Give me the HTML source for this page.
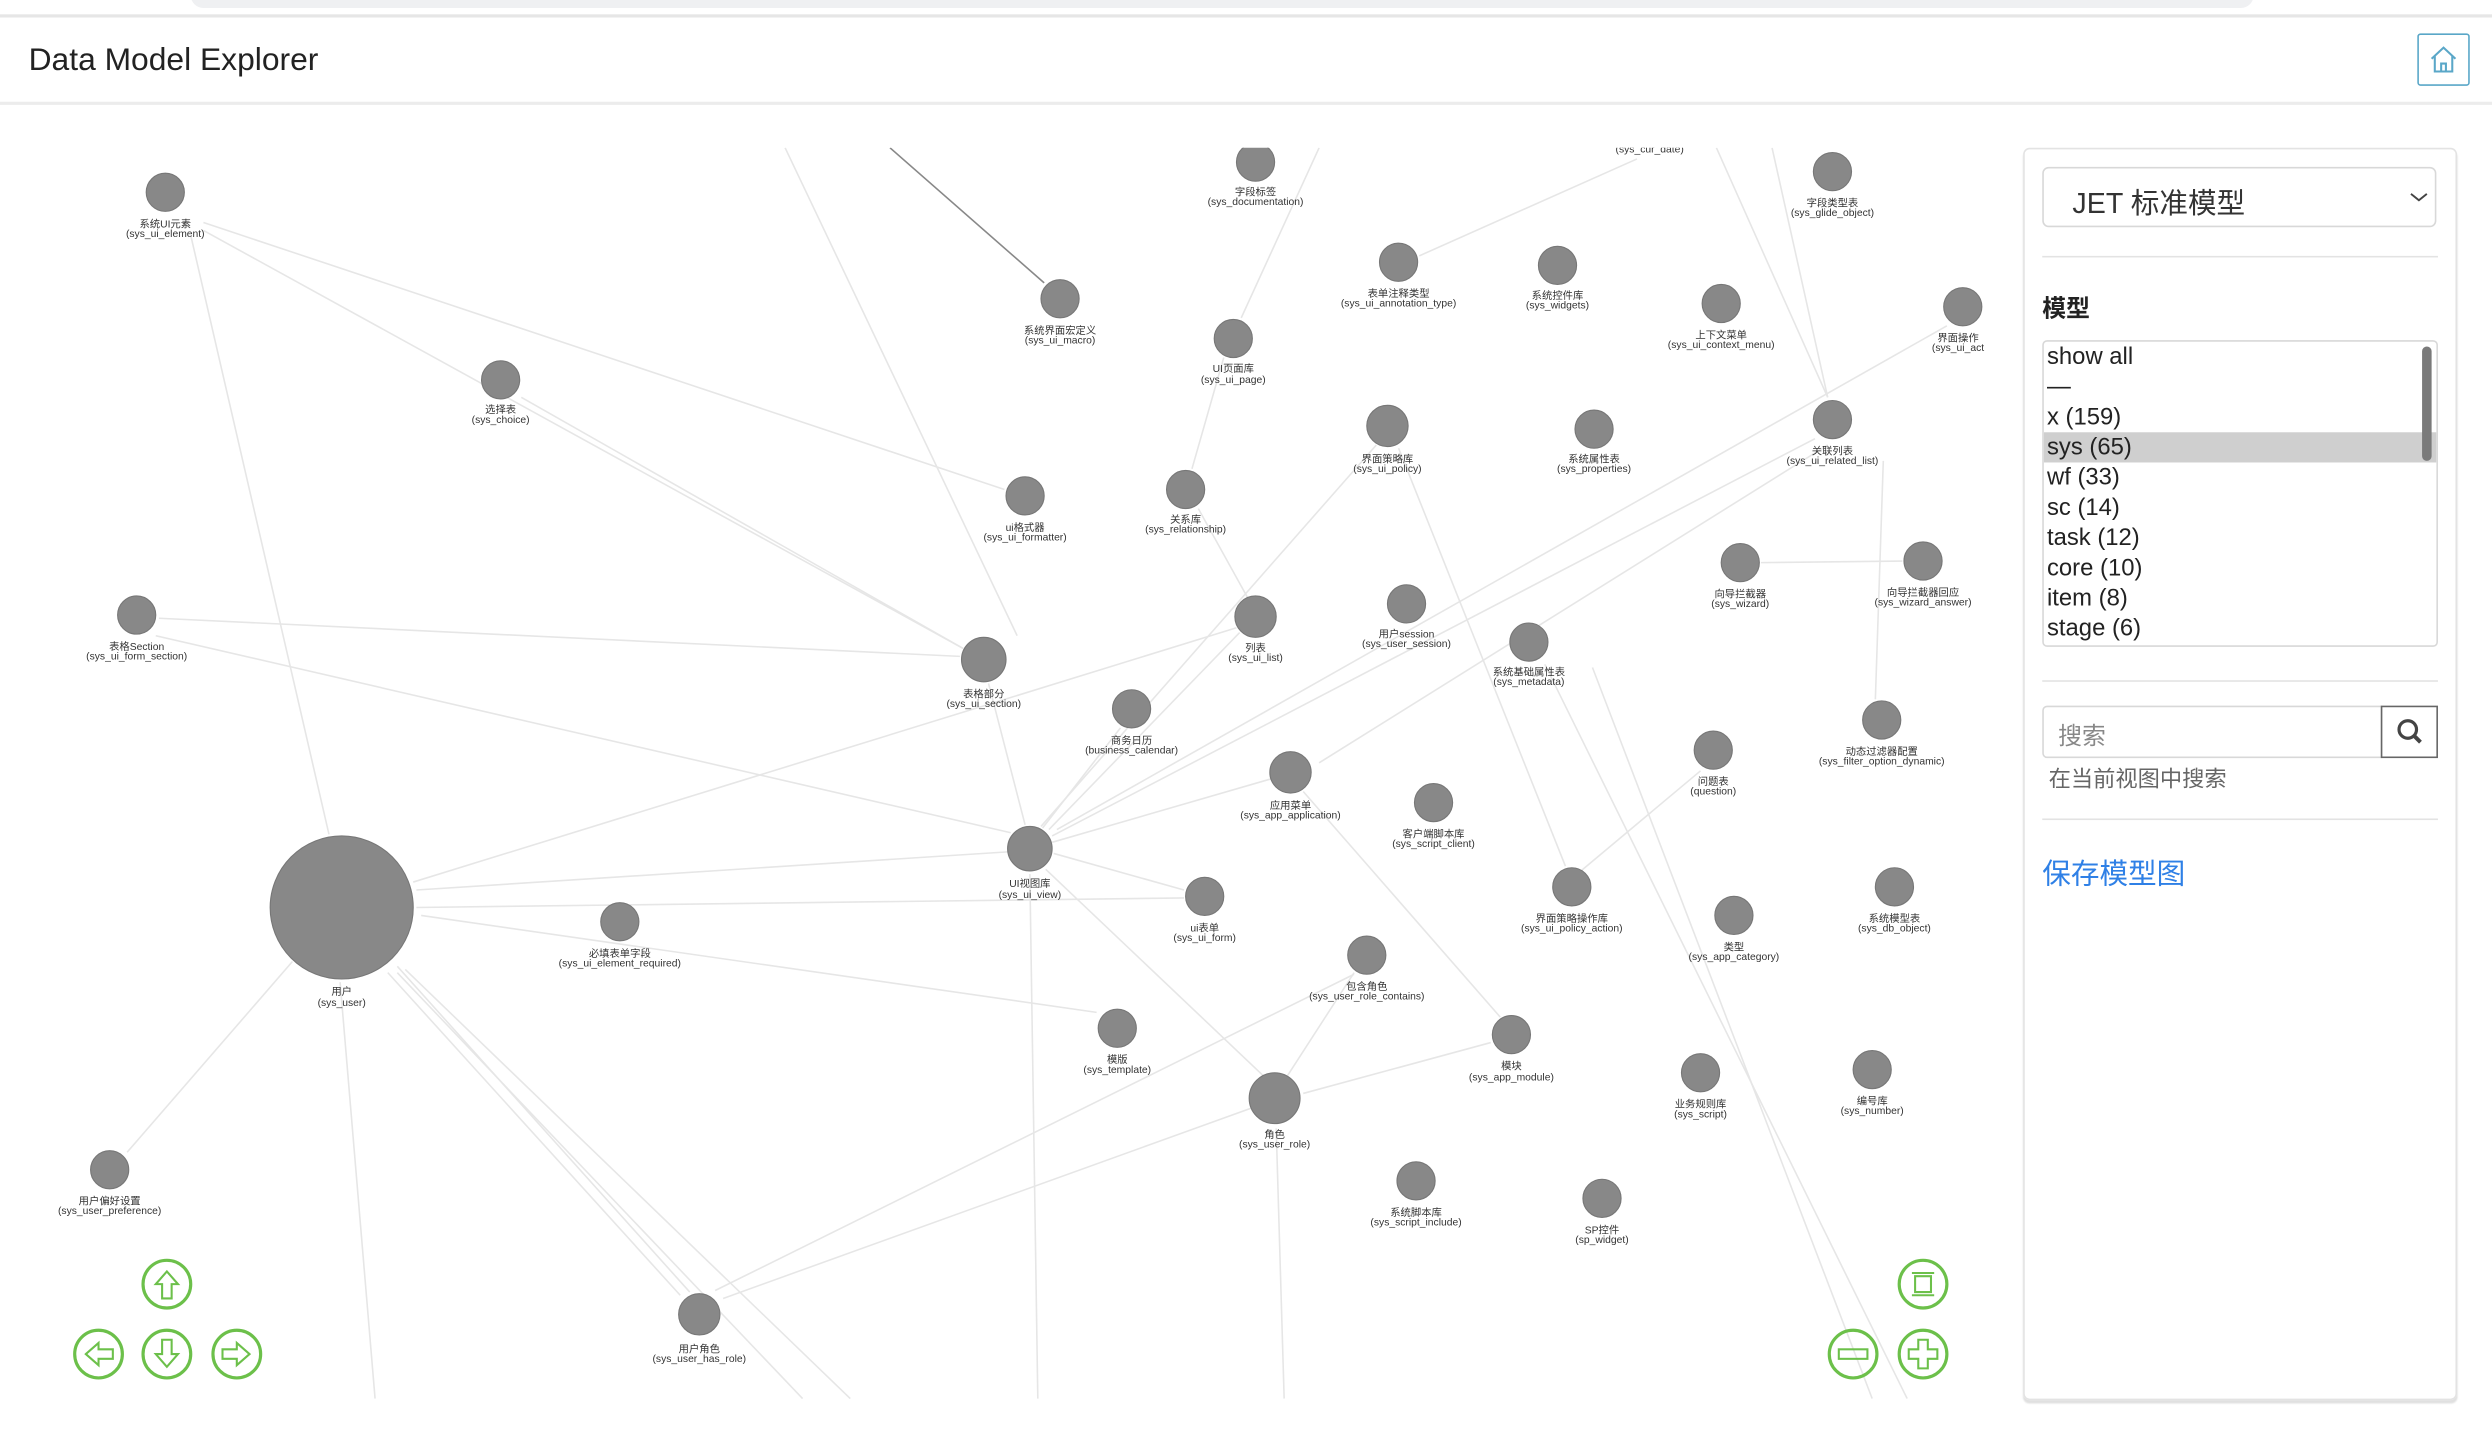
<!DOCTYPE html>
<html><head><meta charset="utf-8">
<style>
html,body{margin:0;padding:0;background:#fff;overflow:hidden;width:2492px;height:1440px}
#w{position:absolute;left:0;top:0;width:1568px;height:906px;transform:scale(1.58929);transform-origin:0 0;font-family:"Liberation Sans","Noto Sans CJK SC",sans-serif;}
.topbar{position:absolute;left:120px;top:-6px;width:1298px;height:11px;background:#eff0f2;border-radius:0 0 8px 8px}
.l1{position:absolute;left:0;top:9px;width:1568px;height:2px;background:#e6e6e6}
.l2{position:absolute;left:0;top:64px;width:1568px;height:2px;background:#ececec}
h1{position:absolute;left:18px;top:27px;margin:0;font-size:20px;font-weight:normal;color:#222;letter-spacing:0}
.home{position:absolute;left:1521px;top:21px;width:33px;height:33px;border:1px solid #5aa7c8;border-radius:2px;box-sizing:border-box}
.panel{position:absolute;left:1273px;top:93px;width:273px;height:788px;border:1px solid #e3e3e3;border-radius:4px;box-sizing:border-box;box-shadow:0 2px 1px #e0e0e0}
.sel{position:absolute;left:1285px;top:105px;width:248px;height:38px;border:1px solid #d8d8d8;border-radius:4px;box-sizing:border-box;font-size:18px;color:#333;padding:8px 0 0 18px}
.hr{position:absolute;left:1285px;width:249px;height:1px;background:#e3e3e3}
.lbl{position:absolute;left:1285px;top:183px;font-size:15px;font-weight:bold;color:#222}
.list{position:absolute;left:1285px;top:214px;width:249px;height:193px;border:1px solid #d8d8d8;border-radius:3px;box-sizing:border-box;overflow:hidden}
.list div{height:19px;line-height:19px;font-size:15px;color:#222;padding-left:2px}
.list .on{background:#cfcfcf}
.sb{position:absolute;left:1524px;top:218px;width:6px;height:72px;background:#7a7a7a;border-radius:3px}
.srch{position:absolute;left:1285px;top:444px;width:214px;height:33px;border:1px solid #d8d8d8;border-radius:3px 0 0 3px;box-sizing:border-box;font-size:15px;color:#888;padding:7px 0 0 9px}
.sbtn{position:absolute;left:1498px;top:444px;width:36px;height:33px;border:1px solid #666;box-sizing:border-box}
.hint{position:absolute;left:1289px;top:480px;font-size:14px;color:#666}
.save{position:absolute;left:1285px;top:536px;font-size:18px;color:#2f80e6}
svg text{font-family:"Liberation Sans","Noto Sans CJK SC",sans-serif}
</style></head><body><div id="w">
<div class="topbar"></div><div class="l1"></div>
<h1>Data Model Explorer</h1>
<div class="home"><svg width="31" height="31" viewBox="0 0 31 31"><path d="M8 15 L15.5 8 L23 15 M10 13.5 V23 H21 V13.5 M14 23 V18 H17 V23" fill="none" stroke="#5aa7c8" stroke-width="1.3"/></svg></div>
<div class="l2"></div>

<svg style="position:absolute;left:0;top:93px" width="1250" height="788" viewBox="0 93 1250 788">
<g stroke="#e6e6e6" stroke-width="1" fill="none">
<line x1="120" y1="148" x2="207" y2="525"/>
<line x1="128" y1="145" x2="606" y2="408"/>
<line x1="128" y1="140" x2="632" y2="308"/>
<line x1="328" y1="250" x2="606" y2="408"/>
<line x1="494" y1="93" x2="640" y2="400"/>
<line x1="830" y1="93" x2="781" y2="200"/>
<line x1="1030" y1="100" x2="893" y2="161"/>
<line x1="1080" y1="93" x2="1150" y2="250"/>
<line x1="1115" y1="93" x2="1150" y2="250"/>
<line x1="1142" y1="276" x2="662" y2="526"/>
<line x1="1225" y1="205" x2="665" y2="522"/>
<line x1="866" y1="280" x2="655" y2="520"/>
<line x1="880" y1="282" x2="985" y2="545"/>
<line x1="770" y1="225" x2="750" y2="295"/>
<line x1="754" y1="320" x2="785" y2="376"/>
<line x1="100" y1="389" x2="604" y2="413"/>
<line x1="98" y1="400" x2="636" y2="524"/>
<line x1="622" y1="430" x2="645" y2="519"/>
<line x1="780" y1="398" x2="660" y2="522"/>
<line x1="778" y1="395" x2="260" y2="555"/>
<line x1="1108" y1="354" x2="1197" y2="353"/>
<line x1="1180" y1="440" x2="1185" y2="290"/>
<line x1="705" y1="458" x2="656" y2="521"/>
<line x1="800" y1="490" x2="662" y2="530"/>
<line x1="820" y1="498" x2="944" y2="640"/>
<line x1="634" y1="536" x2="262" y2="560"/>
<line x1="663" y1="537" x2="745" y2="560"/>
<line x1="658" y1="547" x2="795" y2="677"/>
<line x1="745" y1="565" x2="262" y2="571"/>
<line x1="265" y1="576" x2="690" y2="637"/>
<line x1="852" y1="612" x2="810" y2="677"/>
<line x1="938" y1="656" x2="820" y2="688"/>
<line x1="1070" y1="485" x2="978" y2="562"/>
<line x1="972" y1="418" x2="1200" y2="880"/>
<line x1="1150" y1="280" x2="830" y2="480"/>
<line x1="80" y1="725" x2="184" y2="605"/>
<line x1="434" y1="813" x2="250" y2="608"/>
<line x1="428" y1="815" x2="244" y2="612"/>
<line x1="455" y1="817" x2="788" y2="697"/>
<line x1="450" y1="812" x2="852" y2="613"/>
<line x1="214" y1="618" x2="236" y2="880"/>
<line x1="648" y1="550" x2="653" y2="880"/>
<line x1="803" y1="710" x2="808" y2="880"/>
<line x1="250" y1="612" x2="505" y2="880"/>
<line x1="255" y1="610" x2="535" y2="880"/>
<line x1="1002" y1="420" x2="1178" y2="880" />
</g>
<line x1="560" y1="93" x2="657" y2="178" stroke="#888" stroke-width="1"/>
<g fill="#888" stroke="#777" stroke-width="0.7">
<circle cx="104" cy="121" r="12"/><circle cx="315" cy="239" r="12"/><circle cx="667" cy="188" r="12"/><circle cx="790" cy="102" r="12"/>
<circle cx="776" cy="213" r="12"/><circle cx="880" cy="165" r="12"/><circle cx="980" cy="167" r="12"/><circle cx="1083" cy="191" r="12"/>
<circle cx="1153" cy="108" r="12"/><circle cx="1235" cy="193" r="12"/><circle cx="873" cy="268" r="13"/><circle cx="1003" cy="270" r="12"/>
<circle cx="1153" cy="264" r="12"/><circle cx="645" cy="312" r="12"/><circle cx="746" cy="308" r="12"/><circle cx="86" cy="387" r="12"/>
<circle cx="619" cy="415" r="14"/><circle cx="790" cy="388" r="13"/><circle cx="885" cy="380" r="12"/><circle cx="962" cy="404" r="12"/>
<circle cx="1095" cy="354" r="12"/><circle cx="1210" cy="353" r="12"/><circle cx="712" cy="446" r="12"/><circle cx="812" cy="486" r="13"/>
<circle cx="902" cy="505" r="12"/><circle cx="1078" cy="472" r="12"/><circle cx="1184" cy="453" r="12"/><circle cx="215" cy="571" r="45"/>
<circle cx="390" cy="580" r="12"/><circle cx="648" cy="534" r="14"/><circle cx="758" cy="564" r="12"/><circle cx="989" cy="558" r="12"/>
<circle cx="1091" cy="576" r="12"/><circle cx="1192" cy="558" r="12"/><circle cx="860" cy="601" r="12"/><circle cx="703" cy="647" r="12"/>
<circle cx="951" cy="651" r="12"/><circle cx="802" cy="691" r="16"/><circle cx="1070" cy="675" r="12"/><circle cx="1178" cy="673" r="12"/>
<circle cx="69" cy="736" r="12"/><circle cx="891" cy="743" r="12"/><circle cx="1008" cy="754" r="12"/><circle cx="440" cy="827" r="13"/>
</g>
<g font-size="6.5" fill="#333" text-anchor="middle">
<text x="104" y="143">系统UI元素</text><text x="104" y="149">(sys_ui_element)</text>
<text x="315" y="260">选择表</text><text x="315" y="266">(sys_choice)</text>
<text x="667" y="210">系统界面宏定义</text><text x="667" y="216">(sys_ui_macro)</text>
<text x="790" y="123">字段标签</text><text x="790" y="129">(sys_documentation)</text>
<text x="776" y="234">UI页面库</text><text x="776" y="241">(sys_ui_page)</text>
<text x="880" y="187">表单注释类型</text><text x="880" y="193">(sys_ui_annotation_type)</text>
<text x="980" y="188">系统控件库</text><text x="980" y="194">(sys_widgets)</text>
<text x="1083" y="213">上下文菜单</text><text x="1083" y="219">(sys_ui_context_menu)</text>
<text x="1153" y="130">字段类型表</text><text x="1153" y="136">(sys_glide_object)</text>
<text x="1232" y="215">界面操作</text><text x="1232" y="221">(sys_ui_act</text>
<text x="1038" y="96">(sys_cur_date)</text>
<text x="873" y="291">界面策略库</text><text x="873" y="297">(sys_ui_policy)</text>
<text x="1003" y="291">系统属性表</text><text x="1003" y="297">(sys_properties)</text>
<text x="1153" y="286">关联列表</text><text x="1153" y="292">(sys_ui_related_list)</text>
<text x="645" y="334">ui格式器</text><text x="645" y="340">(sys_ui_formatter)</text>
<text x="746" y="329">关系库</text><text x="746" y="335">(sys_relationship)</text>
<text x="86" y="409">表格Section</text><text x="86" y="415">(sys_ui_form_section)</text>
<text x="619" y="439">表格部分</text><text x="619" y="445">(sys_ui_section)</text>
<text x="790" y="410">列表</text><text x="790" y="416">(sys_ui_list)</text>
<text x="885" y="401">用户session</text><text x="885" y="407">(sys_user_session)</text>
<text x="962" y="425">系统基础属性表</text><text x="962" y="431">(sys_metadata)</text>
<text x="1095" y="376">向导拦截器</text><text x="1095" y="382">(sys_wizard)</text>
<text x="1210" y="375">向导拦截器回应</text><text x="1210" y="381">(sys_wizard_answer)</text>
<text x="712" y="468">商务日历</text><text x="712" y="474">(business_calendar)</text>
<text x="812" y="509">应用菜单</text><text x="812" y="515">(sys_app_application)</text>
<text x="902" y="527">客户端脚本库</text><text x="902" y="533">(sys_script_client)</text>
<text x="1078" y="494">问题表</text><text x="1078" y="500">(question)</text>
<text x="1184" y="475">动态过滤器配置</text><text x="1184" y="481">(sys_filter_option_dynamic)</text>
<text x="215" y="626">用户</text><text x="215" y="633">(sys_user)</text>
<text x="390" y="602">必填表单字段</text><text x="390" y="608">(sys_ui_element_required)</text>
<text x="648" y="558">UI视图库</text><text x="648" y="565">(sys_ui_view)</text>
<text x="758" y="586">ui表单</text><text x="758" y="592">(sys_ui_form)</text>
<text x="989" y="580">界面策略操作库</text><text x="989" y="586">(sys_ui_policy_action)</text>
<text x="1091" y="598">类型</text><text x="1091" y="604">(sys_app_category)</text>
<text x="1192" y="580">系统模型表</text><text x="1192" y="586">(sys_db_object)</text>
<text x="860" y="623">包含角色</text><text x="860" y="629">(sys_user_role_contains)</text>
<text x="703" y="669">模版</text><text x="703" y="675">(sys_template)</text>
<text x="951" y="673">模块</text><text x="951" y="680">(sys_app_module)</text>
<text x="802" y="716">角色</text><text x="802" y="722">(sys_user_role)</text>
<text x="1070" y="697">业务规则库</text><text x="1070" y="703">(sys_script)</text>
<text x="1178" y="695">编号库</text><text x="1178" y="701">(sys_number)</text>
<text x="69" y="758">用户偏好设置</text><text x="69" y="764">(sys_user_preference)</text>
<text x="891" y="765">系统脚本库</text><text x="891" y="771">(sys_script_include)</text>
<text x="1008" y="776">SP控件</text><text x="1008" y="782">(sp_widget)</text>
<text x="440" y="851">用户角色</text><text x="440" y="857">(sys_user_has_role)</text>
</g>
<g fill="none" stroke="#6cc04a" stroke-width="2">
<circle cx="105" cy="808" r="15"/><path d="M105 800 L98 808 H102 V817 H108 V808 H112 Z" stroke-width="1.3"/>
<circle cx="62" cy="852" r="15"/><path d="M54 852 L62 845 V849 H71 V855 H62 V859 Z" stroke-width="1.3"/>
<circle cx="105" cy="852" r="15"/><path d="M105 860 L98 852 H102 V843 H108 V852 H112 Z" stroke-width="1.3"/>
<circle cx="149" cy="852" r="15"/><path d="M157 852 L149 845 V849 H140 V855 H149 V859 Z" stroke-width="1.3"/>
<circle cx="1210" cy="808" r="15"/><path d="M1203 801 H1217 M1203 815 H1217 M1205 803 V813 H1215 V803 Z" stroke-width="1.3"/>
<circle cx="1166" cy="852" r="15"/><rect x="1157" y="849" width="18" height="6" stroke-width="1.3"/>
<circle cx="1210" cy="852" r="15"/><path d="M1207 843 H1213 V849 H1219 V855 H1213 V861 H1207 V855 H1201 V849 H1207 Z" stroke-width="1.3"/>
</g>
</svg>

<div class="panel"></div>
<div class="sel">JET 标准模型<svg style="position:absolute;right:4px;top:14px" width="12" height="8" viewBox="0 0 12 8"><path d="M1 2 L6 6 L11 2" fill="none" stroke="#444" stroke-width="1.2"/></svg></div>
<div class="hr" style="top:161px"></div>
<div class="lbl">模型</div>
<div class="list"><div>show all</div><div>—</div><div>x (159)</div><div class="on">sys (65)</div><div>wf (33)</div><div>sc (14)</div><div>task (12)</div><div>core (10)</div><div>item (8)</div><div>stage (6)</div></div>
<div class="sb"></div>
<div class="hr" style="top:428px"></div>
<div class="srch">搜索</div>
<div class="sbtn"><svg width="34" height="31" viewBox="0 0 34 31"><circle cx="16" cy="14" r="5.5" fill="none" stroke="#444" stroke-width="2"/><line x1="20" y1="18" x2="24" y2="22" stroke="#444" stroke-width="2.5"/></svg></div>
<div class="hint">在当前视图中搜索</div>
<div class="hr" style="top:515px"></div>
<div class="save">保存模型图</div>
</div></body></html>
